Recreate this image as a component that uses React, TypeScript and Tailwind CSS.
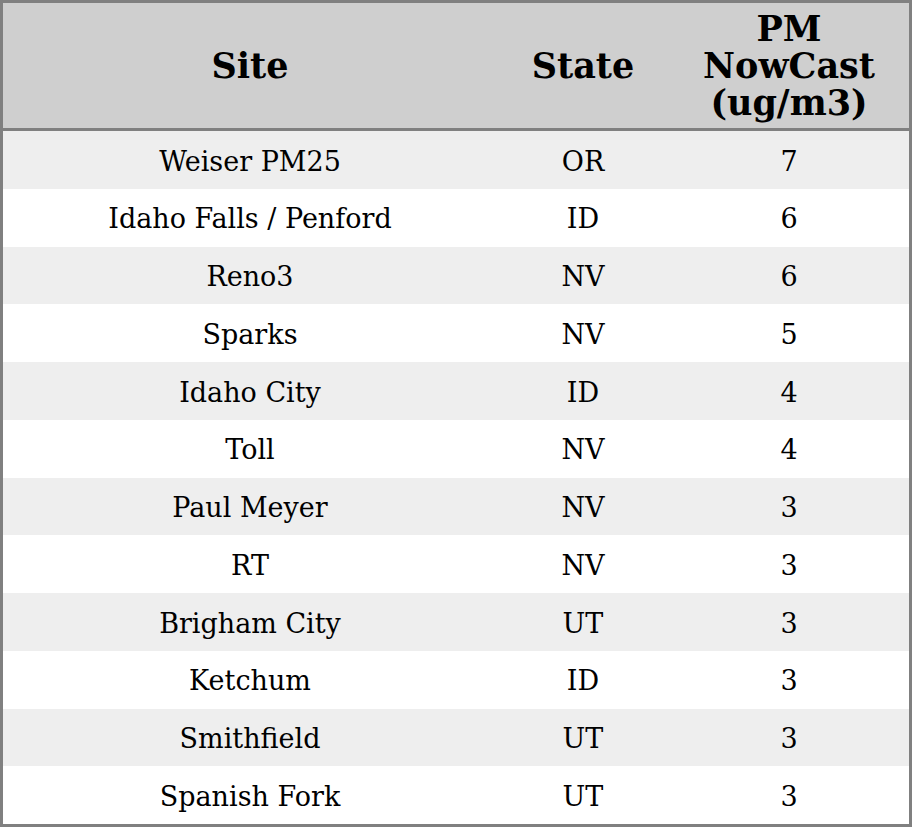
const rows: [string, string, number][] = [
  ["Weiser PM25", "OR", 7],
  ["Idaho Falls / Penford", "ID", 6],
  ["Reno3", "NV", 6],
  ["Sparks", "NV", 5],
  ["Idaho City", "ID", 4],
  ["Toll", "NV", 4],
  ["Paul Meyer", "NV", 3],
  ["RT", "NV", 3],
  ["Brigham City", "UT", 3],
  ["Ketchum", "ID", 3],
  ["Smithfield", "UT", 3],
  ["Spanish Fork", "UT", 3],
]

export default function App() {
  return (
    <div className="flex h-[827px] w-[912px] flex-col border-[3px] border-[#808080] bg-white font-['DejaVu_Serif',serif] text-black">
      <div className="grid h-[128px] shrink-0 grid-cols-[494px_172px_1fr] items-center border-b-[3px] border-[#808080] bg-[#cfcfcf] text-center text-[35px] font-bold leading-[37px]">
        <div>Site</div>
        <div>State</div>
        <div>
          PM
          <br />
          NowCast
          <br />
          (ug/m3)
        </div>
      </div>
      <div className="flex flex-1 flex-col">
        {rows.map(([site, state, value], i) => (
          <div
            key={site}
            className={`grid flex-1 grid-cols-[494px_172px_1fr] items-center pt-[4px] text-center text-[27px] ${
              i % 2 === 0 ? "bg-[#eeeeee]" : "bg-white"
            }`}
          >
            <div>{site}</div>
            <div>{state}</div>
            <div>{value}</div>
          </div>
        ))}
      </div>
    </div>
  )
}
